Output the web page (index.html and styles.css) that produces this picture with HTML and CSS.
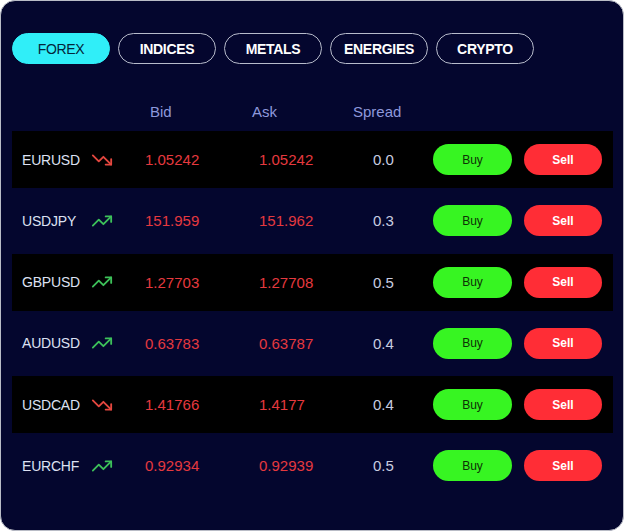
FILE: index.html
```html
<!DOCTYPE html>
<html>
<head>
<meta charset="utf-8">
<link rel="stylesheet" href="styles.css">
</head>
<body>
<div class="card">
  <div class="tabs">
    <button class="tab active">FOREX</button>
    <button class="tab">INDICES</button>
    <button class="tab">METALS</button>
    <button class="tab">ENERGIES</button>
    <button class="tab">CRYPTO</button>
  </div>
  <div class="head">
    <span>Bid</span>
    <span>Ask</span>
    <span>Spread</span>
  </div>
  <div class="rows">
    <div class="row dark">
      <span class="pair">EURUSD</span>
      <span class="trend down"><svg viewBox="0 0 24 24" width="22" height="22"><polyline points="2 7 8.5 13.5 13.5 8.5 22 17"/><polyline points="16 17 22 17 22 11"/></svg></span>
      <span class="val">1.05242</span>
      <span class="val">1.05242</span>
      <span class="spread">0.0</span>
      <button class="buy">Buy</button>
      <button class="sell">Sell</button>
    </div>
    <div class="row">
      <span class="pair">USDJPY</span>
      <span class="trend up"><svg viewBox="0 0 24 24" width="22" height="22"><polyline points="2 17 8.5 10.5 13.5 15.5 22 7"/><polyline points="16 7 22 7 22 13"/></svg></span>
      <span class="val">151.959</span>
      <span class="val">151.962</span>
      <span class="spread">0.3</span>
      <button class="buy">Buy</button>
      <button class="sell">Sell</button>
    </div>
    <div class="row dark">
      <span class="pair">GBPUSD</span>
      <span class="trend up"><svg viewBox="0 0 24 24" width="22" height="22"><polyline points="2 17 8.5 10.5 13.5 15.5 22 7"/><polyline points="16 7 22 7 22 13"/></svg></span>
      <span class="val">1.27703</span>
      <span class="val">1.27708</span>
      <span class="spread">0.5</span>
      <button class="buy">Buy</button>
      <button class="sell">Sell</button>
    </div>
    <div class="row">
      <span class="pair">AUDUSD</span>
      <span class="trend up"><svg viewBox="0 0 24 24" width="22" height="22"><polyline points="2 17 8.5 10.5 13.5 15.5 22 7"/><polyline points="16 7 22 7 22 13"/></svg></span>
      <span class="val">0.63783</span>
      <span class="val">0.63787</span>
      <span class="spread">0.4</span>
      <button class="buy">Buy</button>
      <button class="sell">Sell</button>
    </div>
    <div class="row dark">
      <span class="pair">USDCAD</span>
      <span class="trend down"><svg viewBox="0 0 24 24" width="22" height="22"><polyline points="2 7 8.5 13.5 13.5 8.5 22 17"/><polyline points="16 17 22 17 22 11"/></svg></span>
      <span class="val">1.41766</span>
      <span class="val">1.4177</span>
      <span class="spread">0.4</span>
      <button class="buy">Buy</button>
      <button class="sell">Sell</button>
    </div>
    <div class="row">
      <span class="pair">EURCHF</span>
      <span class="trend up"><svg viewBox="0 0 24 24" width="22" height="22"><polyline points="2 17 8.5 10.5 13.5 15.5 22 7"/><polyline points="16 7 22 7 22 13"/></svg></span>
      <span class="val">0.92934</span>
      <span class="val">0.92939</span>
      <span class="spread">0.5</span>
      <button class="buy">Buy</button>
      <button class="sell">Sell</button>
    </div>
  </div>
</div>
</body>
</html>
```

FILE: styles.css
```css
* { box-sizing: border-box; }
html, body { margin: 0; padding: 0; background: #ffffff; }
body {
  font-family: "Liberation Sans", Arial, sans-serif;
  width: 626px;
  height: 532px;
}
.card {
  width: 624px;
  height: 531px;
  background: #04062e;
  border: 1px solid #b9bcc6;
  border-radius: 15px;
  padding: 32px 9px 0 11px;
}
.tabs {
  display: flex;
  gap: 8px;
}
.tab {
  width: 98px;
  height: 31px;
  border-radius: 16px;
  border: 1.5px solid #b7bbcb;
  background: transparent;
  color: #ffffff;
  font-family: "Liberation Sans", Arial, sans-serif;
  font-weight: 700;
  font-size: 14px;
  letter-spacing: -0.3px;
  padding: 0;
  display: flex;
  align-items: center;
  justify-content: center;
}
.tab.active {
  background: #30eef8;
  border-color: #30eef8;
  color: #04253a;
  font-weight: 400;
}
.head {
  display: grid;
  grid-template-columns: 102px 101px auto;
  padding-left: 138px;
  margin-top: 32px;
  height: 30px;
  align-items: center;
  color: #8e98dc;
  font-size: 15px;
}
.rows {
  margin-top: 5px;
  width: 601px;
  display: flex;
  flex-direction: column;
  gap: 4.25px;
}
.row {
  display: grid;
  grid-template-columns: 69px 54px 114px 114px 60px 79px 90px;
  align-items: center;
  height: 57px;
  padding-left: 10px;
}
.row.dark { background: #000000; }
.row .sell { margin-left: 12px; }
.pair {
  color: #dde1f2;
  font-size: 14px;
  letter-spacing: -0.2px;
}
.trend {
  display: flex;
  align-items: center;
}
.trend svg {
  fill: none;
  stroke-width: 2;
  stroke-linecap: round;
  stroke-linejoin: round;
}
.trend.down svg { stroke: #e4473f; }
.trend.up svg { stroke: #3dc15a; }
.val {
  color: #e5393f;
  font-size: 15px;
}
.spread {
  color: #c9cde0;
  font-size: 15px;
}
.buy, .sell {
  height: 31px;
  border: none;
  border-radius: 16px;
  font-family: "Liberation Sans", Arial, sans-serif;
  font-size: 12px;
  padding: 0;
}
.buy {
  width: 79px;
  background: #37f522;
  color: #0d3205;
}
.sell {
  width: 78px;
  background: #ff2d36;
  color: #ffffff;
  font-weight: 700;
}
```
